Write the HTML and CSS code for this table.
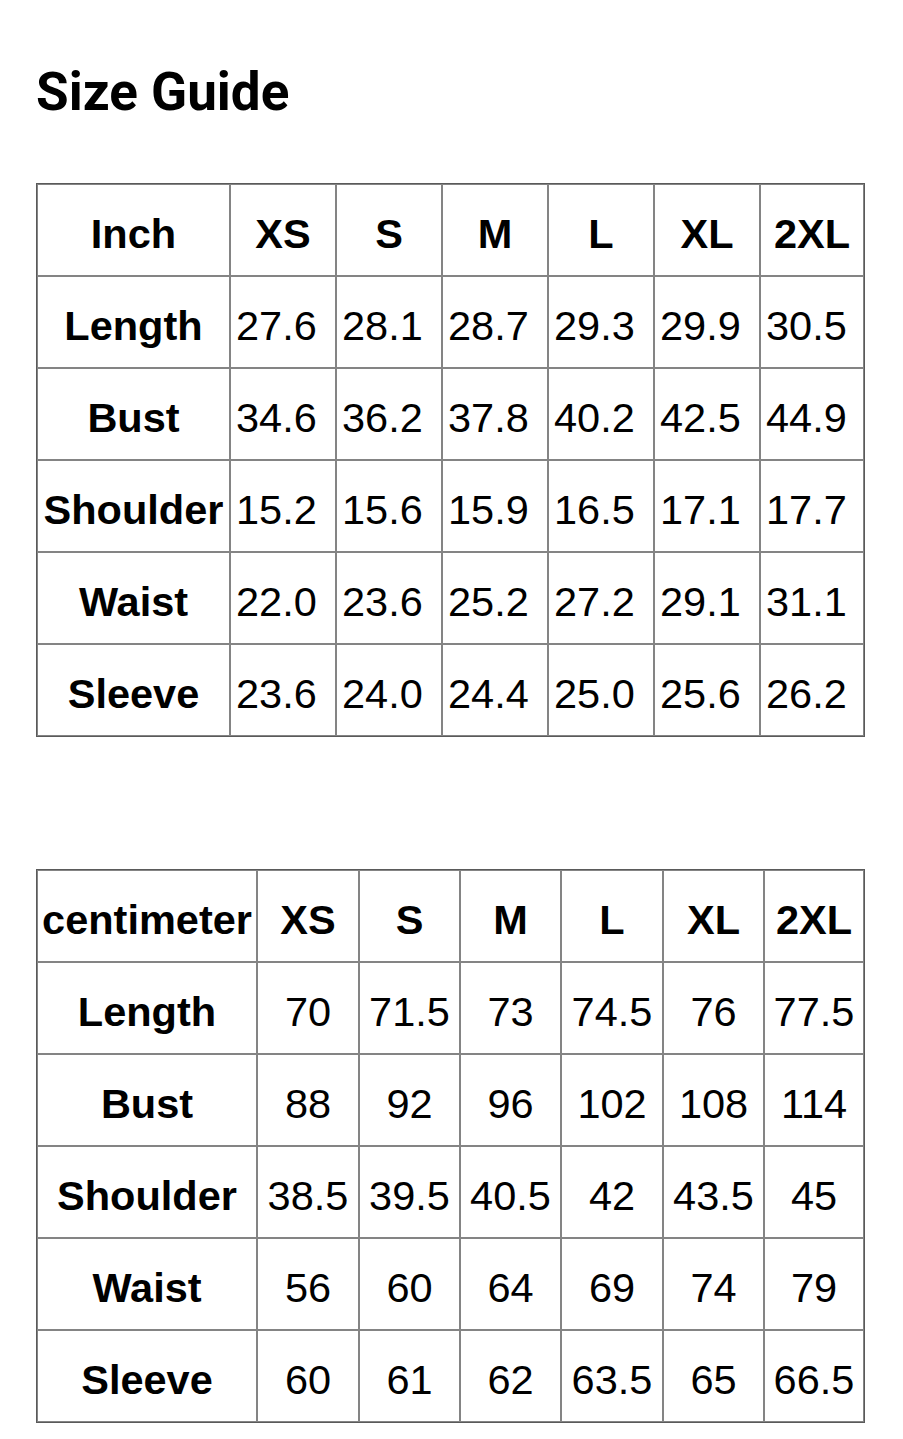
FILE: index.html
```html
<!DOCTYPE html>
<html>
<head>
<meta charset="utf-8">
<link rel="stylesheet" href="styles.css">
</head>
<body>
<div class="page">
  <h1 class="title">Size Guide</h1>
  <table class="size-table inch">
    <colgroup>
      <col class="c-label"><col class="c1"><col class="c2"><col class="c3"><col class="c4"><col class="c5"><col class="c6">
    </colgroup>
    <tr><th>Inch</th><th>XS</th><th>S</th><th>M</th><th>L</th><th>XL</th><th>2XL</th></tr>
    <tr><th>Length</th><td>27.6</td><td>28.1</td><td>28.7</td><td>29.3</td><td>29.9</td><td>30.5</td></tr>
    <tr><th>Bust</th><td>34.6</td><td>36.2</td><td>37.8</td><td>40.2</td><td>42.5</td><td>44.9</td></tr>
    <tr><th>Shoulder</th><td>15.2</td><td>15.6</td><td>15.9</td><td>16.5</td><td>17.1</td><td>17.7</td></tr>
    <tr><th>Waist</th><td>22.0</td><td>23.6</td><td>25.2</td><td>27.2</td><td>29.1</td><td>31.1</td></tr>
    <tr><th>Sleeve</th><td>23.6</td><td>24.0</td><td>24.4</td><td>25.0</td><td>25.6</td><td>26.2</td></tr>
  </table>
  <table class="size-table cm">
    <colgroup>
      <col class="c-label"><col class="c1"><col class="c2"><col class="c3"><col class="c4"><col class="c5"><col class="c6">
    </colgroup>
    <tr><th>centimeter</th><th>XS</th><th>S</th><th>M</th><th>L</th><th>XL</th><th>2XL</th></tr>
    <tr><th>Length</th><td>70</td><td>71.5</td><td>73</td><td>74.5</td><td>76</td><td>77.5</td></tr>
    <tr><th>Bust</th><td>88</td><td>92</td><td>96</td><td>102</td><td>108</td><td>114</td></tr>
    <tr><th>Shoulder</th><td>38.5</td><td>39.5</td><td>40.5</td><td>42</td><td>43.5</td><td>45</td></tr>
    <tr><th>Waist</th><td>56</td><td>60</td><td>64</td><td>69</td><td>74</td><td>79</td></tr>
    <tr><th>Sleeve</th><td>60</td><td>61</td><td>62</td><td>63.5</td><td>65</td><td>66.5</td></tr>
  </table>
</div>
</body>
</html>
```
FILE: styles.css
```css
html, body {
  margin: 0;
  padding: 0;
  background: #ffffff;
}

.page {
  padding: 56px 40px 0 36px;
}

.title {
  margin: 0 0 55px 0;
  font-family: Roboto, "Liberation Sans", sans-serif;
  font-weight: 700;
  font-size: 53px;
  line-height: 72px;
  color: #000;
}

.size-table {
  width: 827px;
  table-layout: fixed;
  border-collapse: separate;
  border-spacing: 0;
  border: 1px solid #5a5a5a;
  font-family: "Liberation Sans", Arial, sans-serif;
  font-size: 41.5px;
  color: #000;
}

.size-table th,
.size-table td {
  height: 82px;
  padding: 8px 0 0 0;
  border: 1px solid #848484;
  text-align: center;
  vertical-align: middle;
  white-space: nowrap;
  overflow: visible;
}

.size-table th {
  font-weight: 700;
}

.size-table td {
  font-weight: 400;
}

.inch td {
  text-align: left;
  padding-left: 5px;
}

.inch .c-label { width: 193px; }
.inch .c1, .inch .c2, .inch .c3, .inch .c4, .inch .c5 { width: 106px; }
.inch .c6 { width: 104px; }

.cm {
  margin-top: 132px;
}
.cm .c-label { width: 220px; }
.cm .c1 { width: 102px; }
.cm .c2 { width: 101px; }
.cm .c3 { width: 101px; }
.cm .c4 { width: 102px; }
.cm .c5 { width: 101px; }
.cm .c6 { width: 100px; }
```
